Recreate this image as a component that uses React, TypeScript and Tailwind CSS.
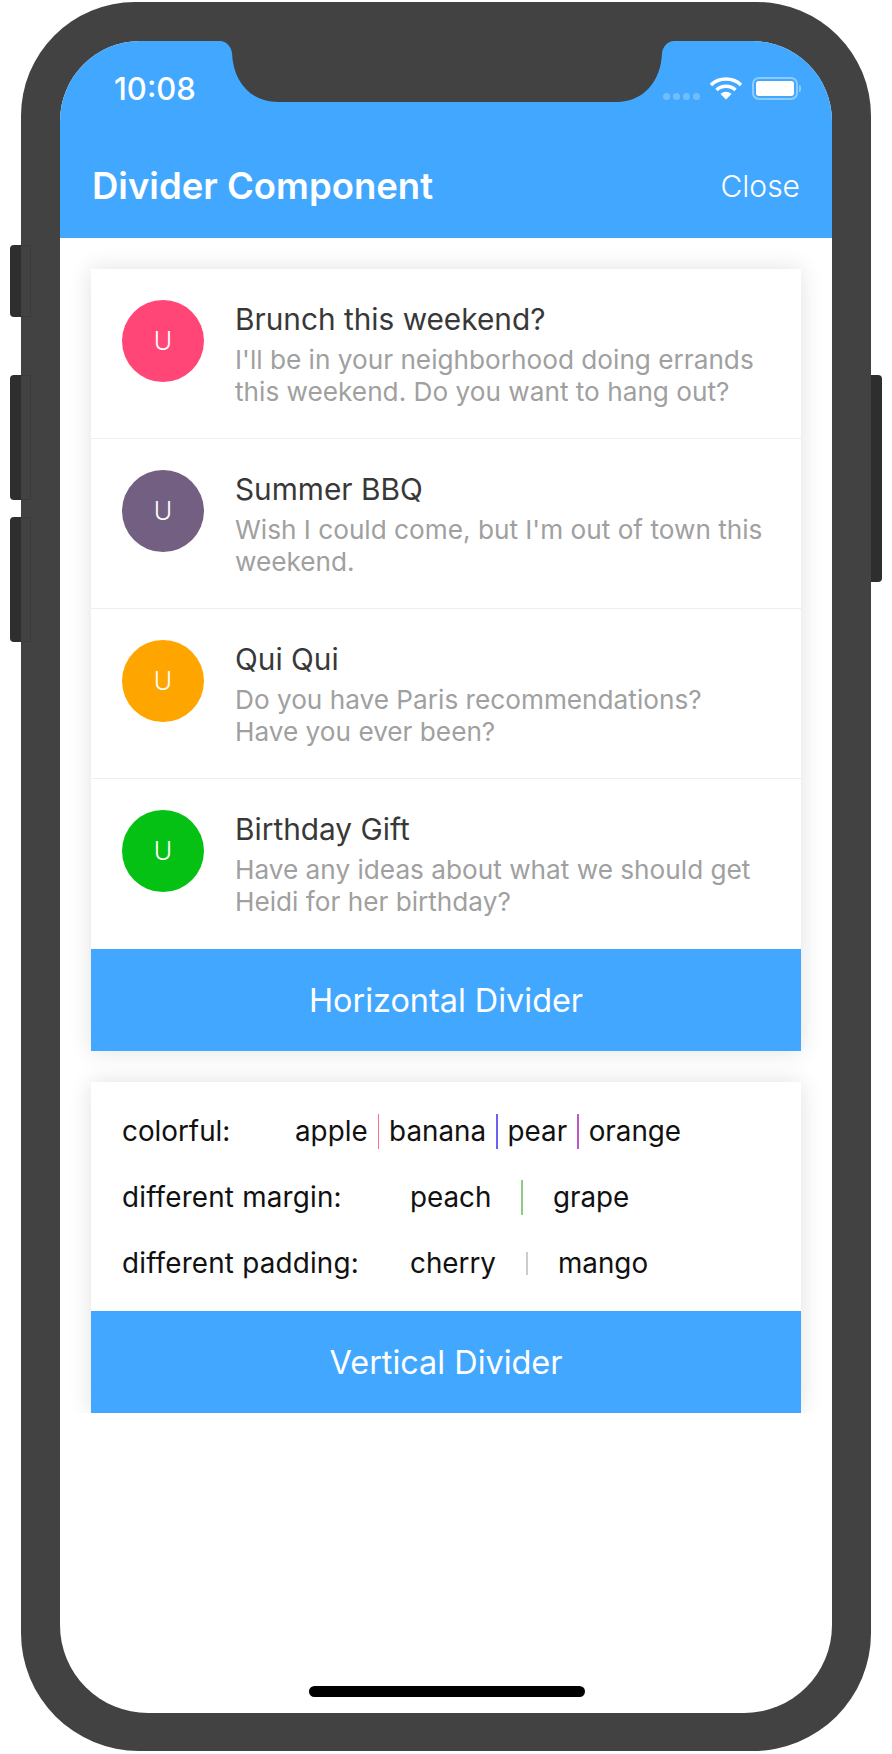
const FONT = "font-['Inter',sans-serif]";

const messages = [
  {
    title: 'Brunch this weekend?',
    color: 'bg-[#ff4677]',
    lines: ["I'll be in your neighborhood doing errands", 'this weekend. Do you want to hang out?'],
  },
  {
    title: 'Summer BBQ',
    color: 'bg-[#725f81]',
    lines: ["Wish I could come, but I'm out of town this", 'weekend.'],
  },
  {
    title: 'Qui Qui',
    color: 'bg-[#ffa500]',
    lines: ['Do you have Paris recommendations?', 'Have you ever been?'],
  },
  {
    title: 'Birthday Gift',
    color: 'bg-[#04c114]',
    lines: ['Have any ideas about what we should get', 'Heidi for her birthday?'],
  },
];

function Notch() {
  return (
    <svg className="absolute left-[152px] top-0 z-10" width="470" height="62" viewBox="0 0 470 62">
      <path
        d="M8 0 C14 0 19 5 20 12 C21 40 38 61 66 61 H404 C432 61 449 40 450 12 C451 5 456 0 462 0 Z"
        fill="#424242"
      />
    </svg>
  );
}

function StatusBar() {
  return (
    <div className="flex h-[95px] items-center justify-between pl-[54px] pr-[31px]">
      <span className="text-[31px] font-medium leading-[36px] text-white">10:08</span>
      <div className="flex items-center">
        <div className="mt-[15px] flex gap-[3px]">
          <span className="h-[7px] w-[7px] rounded-full bg-white/25" />
          <span className="h-[7px] w-[7px] rounded-full bg-white/25" />
          <span className="h-[7px] w-[7px] rounded-full bg-white/25" />
          <span className="h-[7px] w-[7px] rounded-full bg-white/25" />
        </div>
        <svg className="ml-[10px]" width="32" height="23" viewBox="0 0 32 23">
          <path d="M1 8 C9 0 23 0 31 8" fill="none" stroke="#fff" strokeWidth="3.4" />
          <path d="M6.5 13 C12 8 20 8 25.5 13" fill="none" stroke="#fff" strokeWidth="3.4" />
          <path d="M10.5 17 L16 22.5 L21.5 17 C18 14 14 14 10.5 17 Z" fill="#fff" />
        </svg>
        <div className="ml-[10px] flex h-[23px] w-[46px] items-center justify-center rounded-[7px] border-2 border-white/40">
          <div className="h-[15px] w-[38px] rounded-[3px] bg-white" />
        </div>
        <div className="ml-[1px] h-[7px] w-[2px] rounded-r-full bg-white/40" />
      </div>
    </div>
  );
}

function Band({ label }: { label: string }) {
  return (
    <div className="flex h-[102px] items-center justify-center bg-[#42a8ff] pt-[2px] text-[32.4px] text-white">
      {label}
    </div>
  );
}

function Sep({ color, height = 'h-[35px]', mx = 'mx-[10px]', width = 'w-[1.5px]' }: { color: string; height?: string; mx?: string; width?: string }) {
  return <span className={`${color} ${height} ${mx} ${width} shrink-0`} />;
}

function VerticalRows() {
  return (
    <div className="flex flex-col gap-[31px] pb-[30px] pl-[31px] pt-[32px] text-[27.8px] leading-[35px] text-[#111]">
      <div className="flex h-[35px] items-center">
        <span className="w-[173px]">colorful:</span>
        <span>apple</span>
        <Sep color="bg-[#ff6f85]" />
        <span>banana</span>
        <Sep color="bg-[#6a62f0]" />
        <span>pear</span>
        <Sep color="bg-[#c257c4]" />
        <span>orange</span>
      </div>
      <div className="flex h-[35px] items-center">
        <span className="w-[288px] tracking-[0.2px]">different margin:</span>
        <span>peach</span>
        <Sep color="bg-[#8ccb86]" mx="mx-[30px]" />
        <span>grape</span>
      </div>
      <div className="flex h-[35px] items-center">
        <span className="w-[288px] tracking-[0.2px]">different padding:</span>
        <span>cherry</span>
        <Sep color="bg-[#cccccc]" height="h-[23px]" mx="mx-[30px]" width="w-[2px]" />
        <span>mango</span>
      </div>
    </div>
  );
}

export default function App() {
  return (
    <div className={`${FONT} relative h-[1754px] w-[892px] overflow-hidden bg-white pl-[21px] pt-[2px]`}>
      {/* hardware buttons */}
      <div className="absolute left-[10px] top-[245px] h-[72px] w-[12px] rounded-l-[4px] bg-[#2e2e2e]" />
      <div className="absolute left-[10px] top-[375px] h-[125px] w-[12px] rounded-l-[4px] bg-[#2e2e2e]" />
      <div className="absolute left-[10px] top-[517px] h-[125px] w-[12px] rounded-l-[4px] bg-[#2e2e2e]" />
      <div className="absolute left-[870px] top-[375px] h-[207px] w-[12px] rounded-r-[4px] bg-[#2e2e2e]" />

      {/* phone frame */}
      <div className="relative h-[1749px] w-[850px] rounded-t-[114px] rounded-b-[118px] bg-[#424242] pl-[39px] pt-[39px]">
        {/* faint button seams on the frame */}
        <div className="absolute left-0 top-[243px] h-[72px] w-[10px] border border-l-0 border-[#3b3b3b]" />
        <div className="absolute left-0 top-[373px] h-[125px] w-[10px] border border-l-0 border-[#3b3b3b]" />
        <div className="absolute left-0 top-[515px] h-[125px] w-[10px] border border-l-0 border-[#3b3b3b]" />

        <div className="relative h-[1672px] w-[772px] overflow-hidden rounded-t-[80px] rounded-b-[88px] bg-white">
          <Notch />
          <div className="h-[197px] bg-[#42a8ff]">
            <StatusBar />
            <div className="flex h-[100px] items-center justify-between pl-[32px] pr-[32px] text-white">
              <span className="text-[36.5px] font-semibold">Divider Component</span>
              <span className="text-[30px] font-light">Close</span>
            </div>
          </div>

          {/* scroll area clips the last card's shadow */}
          <div className="overflow-hidden px-[31px] pt-[31px]">
            <div className="mb-[31px] bg-white shadow-[0_0_22px_rgba(0,0,0,0.12)]">
              {messages.map((m, i) => (
                <div
                  key={m.title}
                  className={`flex h-[170px] gap-[31px] px-[31px] pt-[31px] ${i < 3 ? 'border-b border-[#eeeeee]' : ''}`}
                >
                  <div className={`${m.color} flex h-[82px] w-[82px] shrink-0 items-center justify-center rounded-full pt-[1px] text-[25px] font-light text-white`}>
                    U
                  </div>
                  <div className="mt-[1px]">
                    <div className="text-[29.8px] leading-[36px] text-[#383838]">{m.title}</div>
                    <div className="mt-[7px] text-[26.2px] leading-[32px] text-[#a0a0a0]">
                      {m.lines.map((line) => (
                        <div key={line}>{line}</div>
                      ))}
                    </div>
                  </div>
                </div>
              ))}
              <Band label="Horizontal Divider" />
            </div>
            <div className="bg-white shadow-[0_0_22px_rgba(0,0,0,0.12)]">
              <VerticalRows />
              <Band label="Vertical Divider" />
            </div>
          </div>

          {/* home indicator */}
          <div className="absolute bottom-[16px] left-[249px] h-[11px] w-[276px] rounded-full bg-black" />
        </div>
      </div>
    </div>
  );
}
